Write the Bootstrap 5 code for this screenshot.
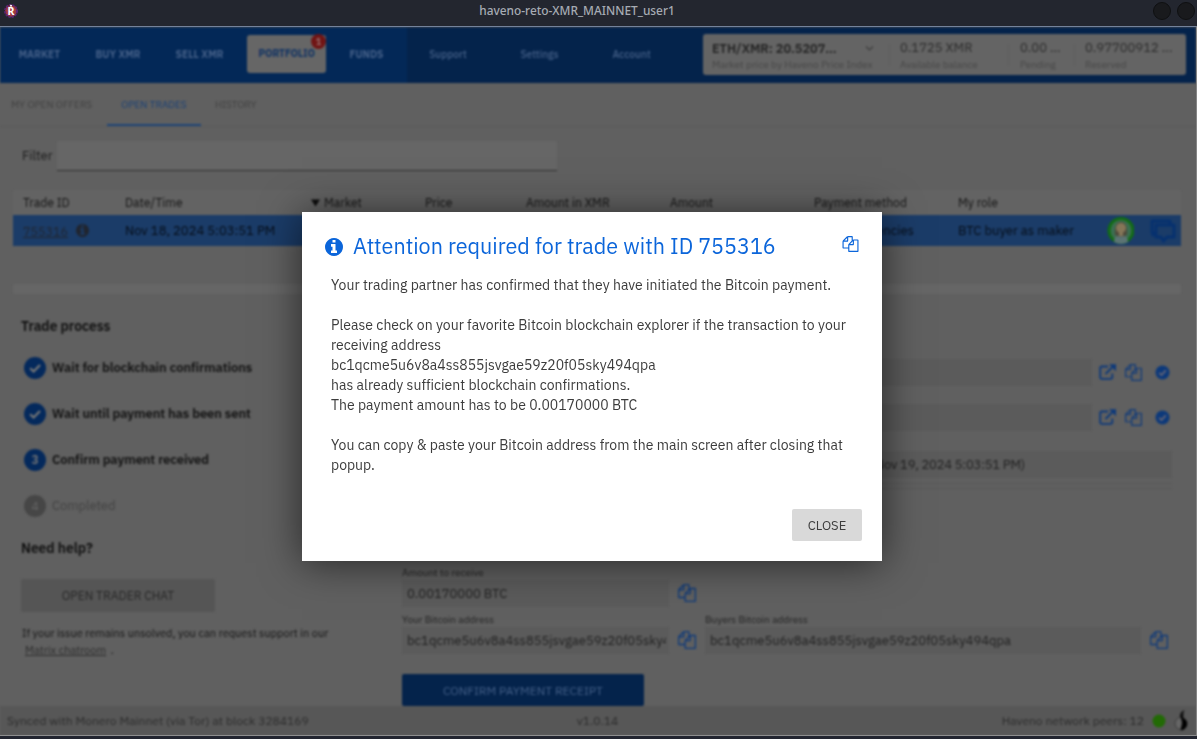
<!DOCTYPE html>
<html lang="en">
<head>
<meta charset="utf-8">
<meta name="viewport" content="width=device-width, initial-scale=1">
<title>haveno-reto-XMR_MAINNET_user1</title>
<link href="https://cdn.jsdelivr.net/npm/bootstrap@5.3.0/dist/css/bootstrap.min.css" rel="stylesheet">
<style>
  body { height: 739px; overflow: hidden; background: #222530; font-family: "IBM Plex Sans", Roboto, "Liberation Sans", sans-serif; font-size: 13px; line-height: 20px; color: #1b1b1b; white-space: nowrap; }
  /* window frame */
  .titlebar { height: 26px; padding-right: 43px; background: #23262f; color: #a6abb3; font: 500 11.88px/21px "Noto Sans", sans-serif; }
  .titlebar .logo { left: 3px; top: 3px; }
  .titlebar .dots { right: 2px; top: 2px; gap: 6px; }
  .titlebar .dots span { width: 18px; height: 18px; border-radius: 50%; background: #191a1d; border: 1px solid #0f1012; }
  .win { height: 710px; background: #606060; border-top: 1px solid #74829a; border-bottom: 1px solid #8e8e8e; border-right: 1px solid #858585; overflow: hidden; }
  .app-view { height: 708px; filter: blur(1.3px); }
  /* top navigation */
  .topnav { height: 56px; background: #04234b; }
  .nav-main { width: 407px; background: #032857; font-weight: 700; }
  .nav-side { width: 296px; font-weight: 500; }
  .nav-main > div, .nav-side > div { font-size: 10.2px; line-height: 55px; text-align: center; color: #456088; }
  .w79 { width: 79px; } .w78 { width: 78px; } .w85 { width: 85px; } .w81 { width: 81px; } .w82 { width: 82px; } .w101 { width: 101px; } .w83 { width: 83px; }
  .nav-main > .tab-on { width: 79px; height: 38px; margin: 8px 0 0 5px; line-height: 38px; background: #666; border-radius: 3px; color: #123463; }
  .dotcount { right: 0; top: -1px; width: 15px; height: 15px; border-radius: 50%; background: #701414; color: #967070; font-size: 9px; line-height: 15px; }
  .pricebox { width: 483px; height: 41px; margin-top: 7px; background: #646464; border-radius: 3px; }
  .pricebox > div { padding: 5px 0 0 10px; }
  .pricebox b { display: block; font-size: 13px; font-weight: 400; line-height: 18px; color: #2b2b2b; }
  .pricebox small { display: block; font-size: 9.9px; line-height: 15px; color: #464646; }
  .pricebox .rate { width: 187px; padding-left: 9px; }
  .pricebox .rate b { font-weight: 600; font-size: 12.7px; line-height: 19px; color: #222; }
  .pricebox .rate small { font-size: 10.15px; line-height: 13px; }
  .pricebox .avail { width: 119px; } .pricebox .pend { width: 66px; padding-left: 11px; }
  .pricebox .chev { right: 16px; top: 11px; }
  .vline::after { content: ""; position: absolute; right: 0; top: 10px; height: 22px; border-left: 1px solid #5d5d5d; }
  /* sub tabs */
  .subtabs { height: 44px; font-size: 10px; color: #404040; border-bottom: 1px solid #5a5a5a; }
  .subtabs div { line-height: 43px; height: 43px; padding-left: 11px; }
  .subtabs .sub-first { width: 107px; }
  .subtabs .sub-on { width: 94px; padding: 0; color: #153f78; border-bottom: 2px solid #1d4478; }
  .subtabs .sub-last { padding-left: 14px; }
  /* filter */
  .filter-row { margin: 14px 0 0 22px; gap: 5px; }
  .filter-input { width: 500px; height: 30px; background: #666; border-bottom: 1.5px solid #303030; }
  /* trades table */
  .trades { margin: 19px 15px 0 13px; height: 104px; }
  .trow { display: grid; grid-template-columns: 102px 188px 112px 101px 144px 144px 144px 154px 40px 39px; align-items: center; }
  .trow > div { padding-left: 10px; }
  .thead-row { height: 25px; background: #636363; font-size: 12.1px; color: #141414; }
  .thead-row .sort { padding-left: 7px; }
  .tsel { height: 31px; background: #1b3c68; color: #050c16; font-size: 13px; }
  .tsel .tid { color: #20252f; font-size: 12.5px; text-decoration: underline; }
  .tfoot-row { height: 10px; background: #666; margin-top: 38px; }
  /* trade process */
  .process { width: 402px; padding: 22px 0 0 21px; }
  .sec-title { font-size: 13.8px; font-weight: 600; color: #0e0e0e; }
  .steps { margin-top: 20.500px; gap: 24px; }
  .step { height: 22px; font-weight: 600; letter-spacing: -.08px; color: #101010; }
  .step i { width: 22px; height: 22px; border-radius: 50%; background: #04295c; margin: 0 6px 0 3px; font-style: normal; font-size: 12px; line-height: 22px; text-align: center; color: #777; }
  .step i svg { display: block; margin: 5px; }
  .step.off { font-weight: 400; color: #424242; }
  .step.off i { background: #464646; color: #666; }
  .help-title { margin-top: 21px; }
  .chat-btn { width: 194px; height: 33px; margin: 21px 0 13px; background: #555; border-radius: 2px; font-size: 12.1px; color: #262626; line-height: 33px; text-align: center; }
  .help-text { font-size: 11px; line-height: 17px; padding-left: 1px; color: #141414; }
  .help-text u { margin: 0 2px 0 3px; color: #2c2c2c; }
  /* payment details */
  .details { width: 770px; padding-top: 65px; }
  .fld { height: 27px; background: #5b5b5b; color: #202020; padding: 0 3px 0 5px; line-height: 27px; overflow: hidden; }
  .fld-long { width: 690px; } .fld-short { width: 267px; } .fld-buyer { width: 436px; }
  .fld-row2 { margin-top: 18px; }
  .fld-date { margin-top: 20px; padding-right: 147px; letter-spacing: -.2px; }
  .icons3 { padding-left: 7px; gap: 9px; margin-top: -1px; }
  .bar-line { height: 6px; margin-top: 5px; border: solid #585858; border-width: 1px 0; }
  .lbl { font-size: 10px; line-height: 15px; height: 15px; color: #1f1f1f; }
  .amount { margin-top: 76px; } .addr { margin-top: 5px; }
  .icn { color: #0d397a; fill: currentColor; }
  .copy-gap { margin: 4px 9px 0; }
  .confirm { width: 242px; height: 32px; margin-top: 20px; background: #04234b; border-radius: 2px; color: #456088; font-size: 12px; line-height: 33px; text-align: center; }
  .statusbar { height: 29px; padding: 0 8px 0 7px; background: #575757; color: #2b2b2b; font-size: 12.05px; }
  .statusbar > div { flex: 1 1 0; }
  .statusbar .peers { gap: 8px; }
  /* popup */
  .overlay-pane { inset: 0; padding: 212px 13px 0 0; }
  .popup { width: 580px; height: 349px; background: #fff; box-shadow: 0 2px 38px rgba(0,0,0,.6); padding: 20px 20px 20px 23px; white-space: normal; }
  .popup h1 { font-size: 21.55px; line-height: 28px; height: 30px; font-weight: 400; color: #0b65da; margin: 0 0 0 10px; }
  .popup .blue { color: #0b65da; fill: currentColor; }
  .popup .copy-top { margin: 4px 3px 0 auto; }
  .popup p { font-size: 14px; line-height: 20px; letter-spacing: .01px; color: #3c3c3c; margin: 0 0 20px; }
  .popup .msg { height: 247px; padding: 13px 0 0 6px; }
  .close-btn { width: 70px; height: 32px; padding: 0; border: 0; border-radius: 2px; background: #d9d9d9; color: #3c3c3c; font-size: 13px; line-height: 33px; }
</style>
</head>
<body>
<svg class="d-none">
  <symbol id="copy" viewBox="0 0 1792 1792"><path d="M1696 384q40 0 68 28t28 68v1216q0 40-28 68t-68 28h-960q-40 0-68-28t-28-68v-288h-544q-40 0-68-28t-28-68v-672q0-40 20-88t48-76l408-408q28-28 76-48t88-20h416q40 0 68 28t28 68v328q68-40 128-40h416zm-544 213l-299 299h299v-299zm-640-384l-299 299h299v-299zm196 647l316-316v-416h-384v416q0 40-28 68t-68 28h-416v640h512v-256q0-40 20-88t48-76zm956 804v-1152h-384v416q0 40-28 68t-68 28h-416v640h896z"/></symbol>
  <symbol id="info" viewBox="128 128 1536 1536"><path d="M1152 1376v-160q0-14-9-23t-23-9h-96v-512q0-14-9-23t-23-9h-320q-14 0-23 9t-9 23v160q0 14 9 23t23 9h96v320h-96q-14 0-23 9t-9 23v160q0 14 9 23t23 9h448q14 0 23-9t9-23zm-128-896v-160q0-14-9-23t-23-9h-192q-14 0-23 9t-9 23v160q0 14 9 23t23 9h192q14 0 23-9t9-23zm640 416q0 209-103 385.5t-279.5 279.5-385.5 103-385.5-103-279.5-279.5-103-385.5 103-385.5 279.5-279.5 385.5-103 385.5 103 279.5 279.5 103 385.5z"/></symbol>
  <symbol id="ext" viewBox="0 0 17 16"><path d="M9 2.500H3A1.800 1.800 0 0 0 1.200 4.300V13A1.800 1.800 0 0 0 3 14.800h8.500A1.800 1.800 0 0 0 13.300 13V9.500M6.500 10 13.500 3" fill="none" stroke="currentColor" stroke-width="1.800"/><path d="M10 .2H17V7.200z"/></symbol>
  <symbol id="ok" viewBox="0 0 16 16"><circle cx="8" cy="8" r="7.500"/><path d="M4.500 8.300 7 10.800l4.500-5" fill="none" stroke="#667" stroke-width="1.800"/></symbol>
  <symbol id="tick" viewBox="0 0 12 12"><path d="M1.200 6.200 4.600 9.500 11 3" fill="none" stroke="#777" stroke-width="2.200"/></symbol>
</svg>

<header class="titlebar position-relative text-center">
  <svg class="logo position-absolute" width="16" height="16" viewBox="0 0 16 16"><circle cx="8" cy="8" r="6" fill="#a03a3e" stroke="#5b2473" stroke-width="2" stroke-dasharray="2.200 1"/><text x="8" y="12" text-anchor="middle" font-family="Noto Sans" font-weight="700" font-size="10.500" fill="#fff">R</text><circle cx="8" cy="2.800" r="1" fill="#fff"/></svg>
  <span>haveno-reto-XMR_MAINNET_user1</span>
  <div class="dots position-absolute d-flex"><span></span><span></span></div>
</header>

<main class="win">
<div class="app-view d-flex flex-column">
  <nav class="topnav d-flex flex-shrink-0">
    <div class="nav-main d-flex">
      <div class="w79">MARKET</div>
      <div class="w78">BUY XMR</div>
      <div class="w85">SELL XMR</div>
      <div class="tab-on position-relative">PORTFOLIO<span class="dotcount position-absolute">1</span></div>
      <div class="w81">FUNDS</div>
    </div>
    <div class="nav-side d-flex">
      <div class="w82">Support</div>
      <div class="w101">Settings</div>
      <div class="w83">Account</div>
    </div>
    <div class="pricebox d-flex">
      <div class="rate position-relative vline"><b>ETH/XMR: 20.5207...</b><small>Market price by Haveno Price Index</small>
        <svg class="chev position-absolute" width="9" height="7" viewBox="0 0 9 7"><path d="M1 1.500 4.500 5 8 1.500" fill="none" stroke="#3c3c3c" stroke-width="1.100"/></svg></div>
      <div class="avail position-relative vline"><b>0.1725 XMR</b><small>Available balance</small></div>
      <div class="pend position-relative vline"><b>0.00 ...</b><small>Pending</small></div>
      <div><b>0.97700912 ...</b><small>Reserved</small></div>
    </div>
  </nav>

  <div class="subtabs d-flex flex-shrink-0">
    <div class="sub-first">MY OPEN OFFERS</div>
    <div class="sub-on text-center">OPEN TRADES</div>
    <div class="sub-last">HISTORY</div>
  </div>

  <div class="filter-row d-flex align-items-center"><span>Filter</span><div class="filter-input"></div></div>

  <section class="trades flex-shrink-0">
    <div class="trow thead-row">
      <div>Trade ID</div><div>Date/Time</div>
      <div class="sort d-flex align-items-center"><svg class="me-1" width="10" height="8" viewBox="0 0 10 8"><path d="M1 .5h9L5.500 7.500z" fill="#0c0c0c"/></svg>Market</div>
      <div>Price</div><div>Amount in XMR</div><div>Amount</div><div>Payment method</div><div>My role</div>
    </div>
    <div class="trow tsel">
      <div class="d-flex align-items-center gap-2"><span class="tid">755316</span><svg width="13" height="13" fill="#20252f"><use href="#info"/></svg></div>
      <div>Nov 18, 2024 5:03:51 PM</div><div></div><div></div><div></div><div></div><div>Cryptocurrencies</div><div>BTC buyer as maker</div>
      <div class="p-0 ps-1"><svg class="d-block" width="28" height="28" viewBox="0 0 28 28"><circle cx="15" cy="13.500" r="12" fill="#3c6f52"/><circle cx="15" cy="13.500" r="12" fill="none" stroke="#126c14" stroke-width="3"/><path d="M8 25q0-7 7-7t7 7q-7 4-14 0z" fill="#5c7474"/><path d="M9 18q-1-13 6-13t6 13q-6 3-12 0z" fill="#4d4a3c"/><circle cx="15" cy="11" r="5" fill="#857658"/><path d="M13 15h4v4h-4z" fill="#857658"/></svg></div>
      <div class="p-0 ps-2"><svg class="d-block" width="26" height="24" viewBox="0 0 26 24" fill="#1b3c68" stroke="#06316f" stroke-width="3" stroke-linejoin="round"><path d="M2 2h18v11H6l-3 3-1-3z"/><path d="M6 6h18v12h-7l-3.500 4-2.500-4H6z"/></svg></div>
    </div>
    <div class="tfoot-row"></div>
  </section>

  <div class="d-flex flex-grow-1">
    <aside class="process flex-shrink-0">
      <div class="sec-title">Trade process</div>
      <div class="steps d-flex flex-column">
        <div class="step d-flex align-items-center"><i><svg width="12" height="12"><use href="#tick"/></svg></i>Wait for blockchain confirmations</div>
        <div class="step d-flex align-items-center"><i><svg width="12" height="12"><use href="#tick"/></svg></i>Wait until payment has been sent</div>
        <div class="step d-flex align-items-center"><i>3</i>Confirm payment received</div>
        <div class="step off d-flex align-items-center"><i>4</i>Completed</div>
      </div>
      <div class="sec-title help-title">Need help?</div>
      <div class="chat-btn">OPEN TRADER CHAT</div>
      <div class="help-text">If your issue remains unsolved, you can request support in our<br><u>Matrix chatroom</u> .</div>
    </aside>

    <section class="details">
      <div class="d-flex align-items-center"><div class="fld fld-long"></div>
        <div class="icons3 icn d-flex align-items-center"><svg width="17" height="16"><use href="#ext"/></svg><svg width="17" height="17"><use href="#copy"/></svg><svg class="ms-1" width="15" height="15"><use href="#ok"/></svg></div></div>
      <div class="fld-row2 d-flex align-items-center"><div class="fld fld-long"></div>
        <div class="icons3 icn d-flex align-items-center"><svg width="17" height="16"><use href="#ext"/></svg><svg width="17" height="17"><use href="#copy"/></svg><svg class="ms-1" width="15" height="15"><use href="#ok"/></svg></div></div>
      <div class="fld fld-date text-end">(Nov 19, 2024 5:03:51 PM)</div>
      <div class="bar-line"></div>

      <div class="amount">
        <div class="lbl">Amount to receive</div>
        <div class="d-flex"><div class="fld fld-short">0.00170000 BTC</div><svg class="icn copy-gap" width="18" height="18"><use href="#copy"/></svg></div>
      </div>
      <div class="addr d-flex">
        <div>
          <div class="lbl">Your Bitcoin address</div>
          <div class="d-flex"><div class="fld fld-short"><div class="overflow-hidden">bc1qcme5u6v8a4ss855jsvgae59z20f05sky494qpa</div></div><svg class="icn copy-gap" width="18" height="18"><use href="#copy"/></svg></div>
        </div>
        <div>
          <div class="lbl">Buyers Bitcoin address</div>
          <div class="d-flex"><div class="fld fld-buyer">bc1qcme5u6v8a4ss855jsvgae59z20f05sky494qpa</div><svg class="icn copy-gap" width="18" height="18"><use href="#copy"/></svg></div>
        </div>
      </div>
      <div class="confirm">CONFIRM PAYMENT RECEIPT</div>
    </section>
  </div>

  <footer class="statusbar d-flex align-items-center flex-shrink-0">
    <div>Synced with Monero Mainnet (via Tor) at block 3284169</div>
    <div class="text-center">v1.0.14</div>
    <div class="peers d-flex justify-content-end align-items-center"><span>Haveno network peers: 12</span>
      <svg width="14" height="14"><circle cx="7" cy="7" r="6.500" fill="#226a05"/></svg>
      <svg width="14" height="24" viewBox="0 0 14 24"><path d="M6 8q-.5-5 4.500-7-2 3-1 7z" fill="#101010"/><circle cx="7" cy="14.500" r="6" fill="#666" stroke="#3c3c3c"/><path d="M7 7q1 2 4 3.500a6.200 6.200 0 0 1-4 10.500q3-7 0-14z" fill="#000" stroke="#000"/></svg>
    </div>
  </footer>
</div>
</main>

<div class="overlay-pane position-fixed d-flex justify-content-center align-items-start">
  <div class="popup" role="dialog">
    <div class="d-flex">
      <svg class="blue align-self-center" width="18" height="18"><use href="#info"/></svg>
      <h1>Attention required for trade with ID 755316</h1>
      <svg class="blue copy-top" width="17" height="16"><use href="#copy"/></svg>
    </div>
    <div class="msg">
      <p>Your trading partner has confirmed that they have initiated the Bitcoin payment.</p>
      <p>Please check on your favorite Bitcoin blockchain explorer if the transaction to your<br>receiving address<br>bc1qcme5u6v8a4ss855jsvgae59z20f05sky494qpa<br>has already sufficient blockchain confirmations.<br>The payment amount has to be 0.00170000 BTC</p>
      <p>You can copy &amp; paste your Bitcoin address from the main screen after closing that<br>popup.</p>
    </div>
    <div class="d-flex justify-content-end"><button class="btn close-btn">CLOSE</button></div>
  </div>
</div>
<script src="https://cdn.jsdelivr.net/npm/bootstrap@5.3.0/dist/js/bootstrap.bundle.min.js"></script>
</body>
</html>
